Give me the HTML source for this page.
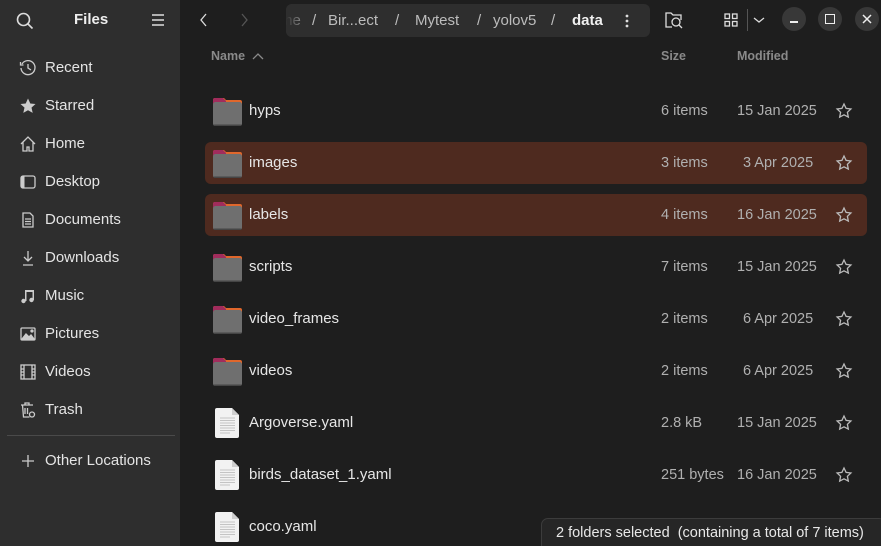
<!DOCTYPE html>
<html><head><meta charset="utf-8"><style>
*{margin:0;padding:0;box-sizing:border-box}
html,body{width:881px;height:546px;overflow:hidden}
body{background:#1e1e1e;font-family:"Liberation Sans","DejaVu Sans",sans-serif;color:#e8e8e8;position:relative}
.a{position:absolute}
#side{left:0;top:0;width:180px;height:546px;background:#2e2e2e}
.si{position:absolute;left:45px;font-size:15px;color:#e4e4e4;line-height:18px}
.ic{position:absolute;left:19px;width:18px;height:18px}
.row{position:absolute;left:205px;width:662px;height:42px;border-radius:6px}
.sel{background:#4e2a1f}
.nm{position:absolute;left:249px;font-size:15px;color:#e6e6e6}
.sz{position:absolute;left:661px;font-size:14.5px;color:#b0b0b0}
.md{position:absolute;left:737px;font-size:14.5px;color:#b0b0b0}
.st{position:absolute;left:835px;width:18px;height:18px}
.fold{position:absolute;left:212px;width:31px;height:30px}
.file{position:absolute;left:215px;width:25px;height:30px}
.wb{position:absolute;top:7px;width:24px;height:24px;border-radius:12px;background:#383838}
.bc{position:absolute;top:8px;font-size:15px;color:#bcbcbc;white-space:nowrap}
</style></head><body>
<div id="side" class="a"></div>
<svg class="a" style="left:15px;top:11px" width="20" height="20" viewBox="0 0 20 20" fill="none" stroke="#ddd" stroke-width="1.6"><circle cx="8.5" cy="8.5" r="6"/><path d="M13 13l4.5 4.5"/></svg>
<div class="a" style="left:74px;top:11px;font-size:15px;font-weight:bold;color:#eee">Files</div>
<svg class="a" style="left:151px;top:13px" width="14" height="14" viewBox="0 0 14 14" stroke="#ddd" stroke-width="1.4"><path d="M1 2h12M1 7h12M1 12h12"/></svg>

<svg class="ic" style="top:59px" viewBox="0 0 18 18" fill="none" stroke="#ccc" stroke-width="1.3"><path d="M3 5A7 7 0 1 1 2 9"/><path d="M9 5v4l3 2"/><path d="M1.5 3v3h3"/></svg><div class="si" style="top:59px">Recent</div>
<svg class="ic" style="top:97px" viewBox="0 0 18 18"><path fill="#ccc" d="M9 1.5l2.3 5 5.2.5-4 3.6 1.2 5.3L9 13.2 4.3 15.9l1.2-5.3-4-3.6 5.2-.5z"/></svg><div class="si" style="top:97px">Starred</div>
<svg class="ic" style="top:135px" viewBox="0 0 18 18" fill="none" stroke="#ccc" stroke-width="1.3"><path d="M2 9L9 2l7 7M4 7v9h4v-4h2v4h4V7"/></svg><div class="si" style="top:135px">Home</div>
<svg class="ic" style="top:173px" viewBox="0 0 18 18" fill="none" stroke="#ccc" stroke-width="1.3"><rect x="2" y="3" width="14" height="12" rx="2"/><rect x="2.5" y="3.5" width="3" height="11" fill="#ccc" stroke="none"/></svg><div class="si" style="top:173px">Desktop</div>
<svg class="ic" style="top:211px" viewBox="0 0 18 18" fill="none" stroke="#ccc" stroke-width="1.3"><path d="M4 2h7l3 3v11H4z"/><path d="M6 8h6M6 10.5h6M6 13h6"/></svg><div class="si" style="top:211px">Documents</div>
<svg class="ic" style="top:249px" viewBox="0 0 18 18" fill="none" stroke="#ccc" stroke-width="1.3"><path d="M9 2v10M5 8l4 4 4-4M4 16h10"/></svg><div class="si" style="top:249px">Downloads</div>
<svg class="ic" style="top:287px" viewBox="0 0 18 18" fill="#ccc"><path d="M6 3h9v10h-1.5V5H7.5v9H6z"/><circle cx="4.5" cy="14" r="2.2"/><circle cx="12.5" cy="13" r="2.2"/></svg><div class="si" style="top:287px">Music</div>
<svg class="ic" style="top:325px" viewBox="0 0 18 18" fill="none" stroke="#ccc" stroke-width="1.3"><rect x="2" y="3" width="14" height="12" rx="1"/><path d="M3 14l4-5 3 3 2-2 3 4z" fill="#ccc"/><circle cx="13" cy="6" r="1" fill="#ccc"/></svg><div class="si" style="top:325px">Pictures</div>
<svg class="ic" style="top:363px" viewBox="0 0 18 18" fill="none" stroke="#ccc" stroke-width="1.3"><rect x="2" y="2" width="14" height="14"/><path d="M5 2v14M13 2v14M2 6h3M2 9h3M2 12h3M13 6h3M13 9h3M13 12h3"/></svg><div class="si" style="top:363px">Videos</div>
<svg class="ic" style="top:401px" viewBox="0 0 18 18" fill="none" stroke="#ccc" stroke-width="1.3"><path d="M2 4h12M6 4V2h4v2M3.5 4l1 12h6M6 7v6M8.5 7v6"/><circle cx="13" cy="13.5" r="2.5"/></svg><div class="si" style="top:401px">Trash</div>
<div class="a" style="left:7px;top:435px;width:168px;height:1px;background:#4a4a4a"></div>
<svg class="ic" style="top:452px" viewBox="0 0 18 18" stroke="#ccc" stroke-width="1.3"><path d="M9 3v12M3 9h12"/></svg><div class="si" style="top:452px">Other Locations</div>

<svg class="a" style="left:198px;top:12px" width="12" height="16" viewBox="0 0 12 16" fill="none" stroke="#ddd" stroke-width="1.3"><path d="M8 2L3 8l5 6"/></svg>
<svg class="a" style="left:238px;top:12px" width="12" height="16" viewBox="0 0 12 16" fill="none" stroke="#555" stroke-width="1.3"><path d="M4 2l5 6-5 6"/></svg>
<div class="a" style="left:286px;top:4px;width:364px;height:33px;background:#2e2e2e;border-radius:6px;overflow:hidden">
<div class="bc" style="left:-6px">me</div>
<div class="bc" style="left:26px">/</div>
<div class="bc" style="left:42px">Bir...ect</div>
<div class="bc" style="left:109px">/</div>
<div class="bc" style="left:129px">Mytest</div>
<div class="bc" style="left:191px">/</div>
<div class="bc" style="left:207px">yolov5</div>
<div class="bc" style="left:265px">/</div>
<div class="bc" style="left:286px;font-weight:bold;color:#f0f0f0">data</div>
<div style="position:absolute;left:0;top:0;width:24px;height:33px;background:linear-gradient(90deg,#2e2e2e,rgba(46,46,46,0))"></div>
<svg style="position:absolute;left:338px;top:9px" width="6" height="16" viewBox="0 0 6 16" fill="#ddd"><circle cx="3" cy="3" r="1.4"/><circle cx="3" cy="8" r="1.4"/><circle cx="3" cy="13" r="1.4"/></svg>
</div>
<svg class="a" style="left:664px;top:11px" width="20" height="18" viewBox="0 0 20 18" fill="none" stroke="#ddd" stroke-width="1.3"><path d="M8 16H2V2h5l2 2h8v5"/><circle cx="12" cy="11" r="4"/><path d="M15 14l3 3"/></svg>
<svg class="a" style="left:724px;top:13px" width="14" height="14" viewBox="0 0 14 14" fill="none" stroke="#ddd" stroke-width="1.3"><rect x="1" y="1" width="4.5" height="4.5"/><rect x="8.5" y="1" width="4.5" height="4.5"/><rect x="1" y="8.5" width="4.5" height="4.5"/><rect x="8.5" y="8.5" width="4.5" height="4.5"/></svg>
<div class="a" style="left:747px;top:9px;width:1px;height:22px;background:#555"></div>
<svg class="a" style="left:753px;top:15px" width="12" height="10" viewBox="0 0 12 10" fill="none" stroke="#ddd" stroke-width="1.3"><path d="M1 3l5 4 5-4"/></svg>
<div class="wb" style="left:782px"><div style="position:absolute;left:8px;top:14px;width:8px;height:1.5px;background:#eee"></div></div>
<div class="wb" style="left:818px"><div style="position:absolute;left:7px;top:7px;width:10px;height:10px;border:1.5px solid #eee"></div></div>
<div class="wb" style="left:855px"><svg style="position:absolute;left:7px;top:7px" width="10" height="10" viewBox="0 0 10 10" stroke="#eee" stroke-width="1.5"><path d="M1 1l8 8M9 1l-8 8"/></svg></div>

<div class="a" style="left:211px;top:49px;font-size:12.5px;font-weight:bold;color:#8a8a8a">Name</div>
<svg class="a" style="left:252px;top:52px" width="12" height="8" viewBox="0 0 12 8" fill="none" stroke="#8a8a8a" stroke-width="1.3"><path d="M1 7l5-5 5 5"/></svg>
<div class="a" style="left:661px;top:49px;font-size:12.5px;font-weight:bold;color:#8a8a8a">Size</div>
<div class="a" style="left:737px;top:49px;font-size:12.5px;font-weight:bold;color:#8a8a8a">Modified</div>

<div class="row sel" style="top:142px"></div>
<div class="row sel" style="top:194px"></div>

<svg width="0" height="0" style="position:absolute"><defs>
<symbol id="fd" viewBox="0 0 31 30"><path d="M3 1h9l2 2h14a2 2 0 0 1 2 2v6H1V3a2 2 0 0 1 2-2z" fill="#e0672c"/><path d="M3 1h8l3 3v6H1V3a2 2 0 0 1 2-2z" fill="#a12c5c"/><rect x="1" y="5" width="29" height="24" rx="2.5" fill="#6f6f6f"/><rect x="1.5" y="27.5" width="28" height="1.5" rx="1" fill="#454545"/></symbol>
<symbol id="fl" viewBox="0 0 25 30"><path d="M2 0h15l7 7v21a2 2 0 0 1-2 2H2a2 2 0 0 1-2-2V2a2 2 0 0 1 2-2z" fill="#f2f2f2"/><path d="M17 0v7h7z" fill="#cfcfcf"/><path d="M5 10h15M5 12.5h15M5 15h15M5 17.5h15M5 20h15M5 22.5h15M5 25h10" stroke="#c4c4c4" stroke-width="1"/></symbol>
<symbol id="sr" viewBox="0 0 18 18"><path fill="none" stroke="#bbb" stroke-width="1.3" d="M9 2l2.1 4.4 4.8.6-3.5 3.3.9 4.8L9 12.8l-4.3 2.3.9-4.8L2.1 7l4.8-.6z"/></symbol>
</defs></svg>

<svg class="fold" style="top:97px" viewBox="0 0 31 30"><use href="#fd" width="31" height="30"/></svg><div class="nm" style="top:102px">hyps</div><div class="sz" style="top:103px">6 items</div><div class="md" style="top:103px">15 Jan 2025</div><svg class="st" style="top:102px" viewBox="0 0 18 18"><use href="#sr" width="18" height="18"/></svg>
<svg class="fold" style="top:149px" viewBox="0 0 31 30"><use href="#fd" width="31" height="30"/></svg><div class="nm" style="top:154px">images</div><div class="sz" style="top:155px">3 items</div><div class="md" style="top:155px;left:743px">3 Apr 2025</div><svg class="st" style="top:154px" viewBox="0 0 18 18"><use href="#sr" width="18" height="18"/></svg>
<svg class="fold" style="top:201px" viewBox="0 0 31 30"><use href="#fd" width="31" height="30"/></svg><div class="nm" style="top:206px">labels</div><div class="sz" style="top:207px">4 items</div><div class="md" style="top:207px">16 Jan 2025</div><svg class="st" style="top:206px" viewBox="0 0 18 18"><use href="#sr" width="18" height="18"/></svg>
<svg class="fold" style="top:253px" viewBox="0 0 31 30"><use href="#fd" width="31" height="30"/></svg><div class="nm" style="top:258px">scripts</div><div class="sz" style="top:259px">7 items</div><div class="md" style="top:259px">15 Jan 2025</div><svg class="st" style="top:258px" viewBox="0 0 18 18"><use href="#sr" width="18" height="18"/></svg>
<svg class="fold" style="top:305px" viewBox="0 0 31 30"><use href="#fd" width="31" height="30"/></svg><div class="nm" style="top:310px">video_frames</div><div class="sz" style="top:311px">2 items</div><div class="md" style="top:311px;left:743px">6 Apr 2025</div><svg class="st" style="top:310px" viewBox="0 0 18 18"><use href="#sr" width="18" height="18"/></svg>
<svg class="fold" style="top:357px" viewBox="0 0 31 30"><use href="#fd" width="31" height="30"/></svg><div class="nm" style="top:362px">videos</div><div class="sz" style="top:363px">2 items</div><div class="md" style="top:363px;left:743px">6 Apr 2025</div><svg class="st" style="top:362px" viewBox="0 0 18 18"><use href="#sr" width="18" height="18"/></svg>
<svg class="file" style="top:408px" viewBox="0 0 25 30"><use href="#fl" width="25" height="30"/></svg><div class="nm" style="top:414px">Argoverse.yaml</div><div class="sz" style="top:415px">2.8 kB</div><div class="md" style="top:415px">15 Jan 2025</div><svg class="st" style="top:414px" viewBox="0 0 18 18"><use href="#sr" width="18" height="18"/></svg>
<svg class="file" style="top:460px" viewBox="0 0 25 30"><use href="#fl" width="25" height="30"/></svg><div class="nm" style="top:466px">birds_dataset_1.yaml</div><div class="sz" style="top:467px">251 bytes</div><div class="md" style="top:467px">16 Jan 2025</div><svg class="st" style="top:466px" viewBox="0 0 18 18"><use href="#sr" width="18" height="18"/></svg>
<svg class="file" style="top:512px" viewBox="0 0 25 30"><use href="#fl" width="25" height="30"/></svg><div class="nm" style="top:518px">coco.yaml</div>

<div class="a" style="left:541px;top:518px;width:345px;height:34px;background:#262626;border:1px solid #3c3c3c;border-radius:7px"></div>
<div class="a" style="left:556px;top:525px;font-size:14.5px;color:#e8e8e8;white-space:nowrap">2 folders selected&nbsp; (containing a total of 7 items)</div>
</body></html>
